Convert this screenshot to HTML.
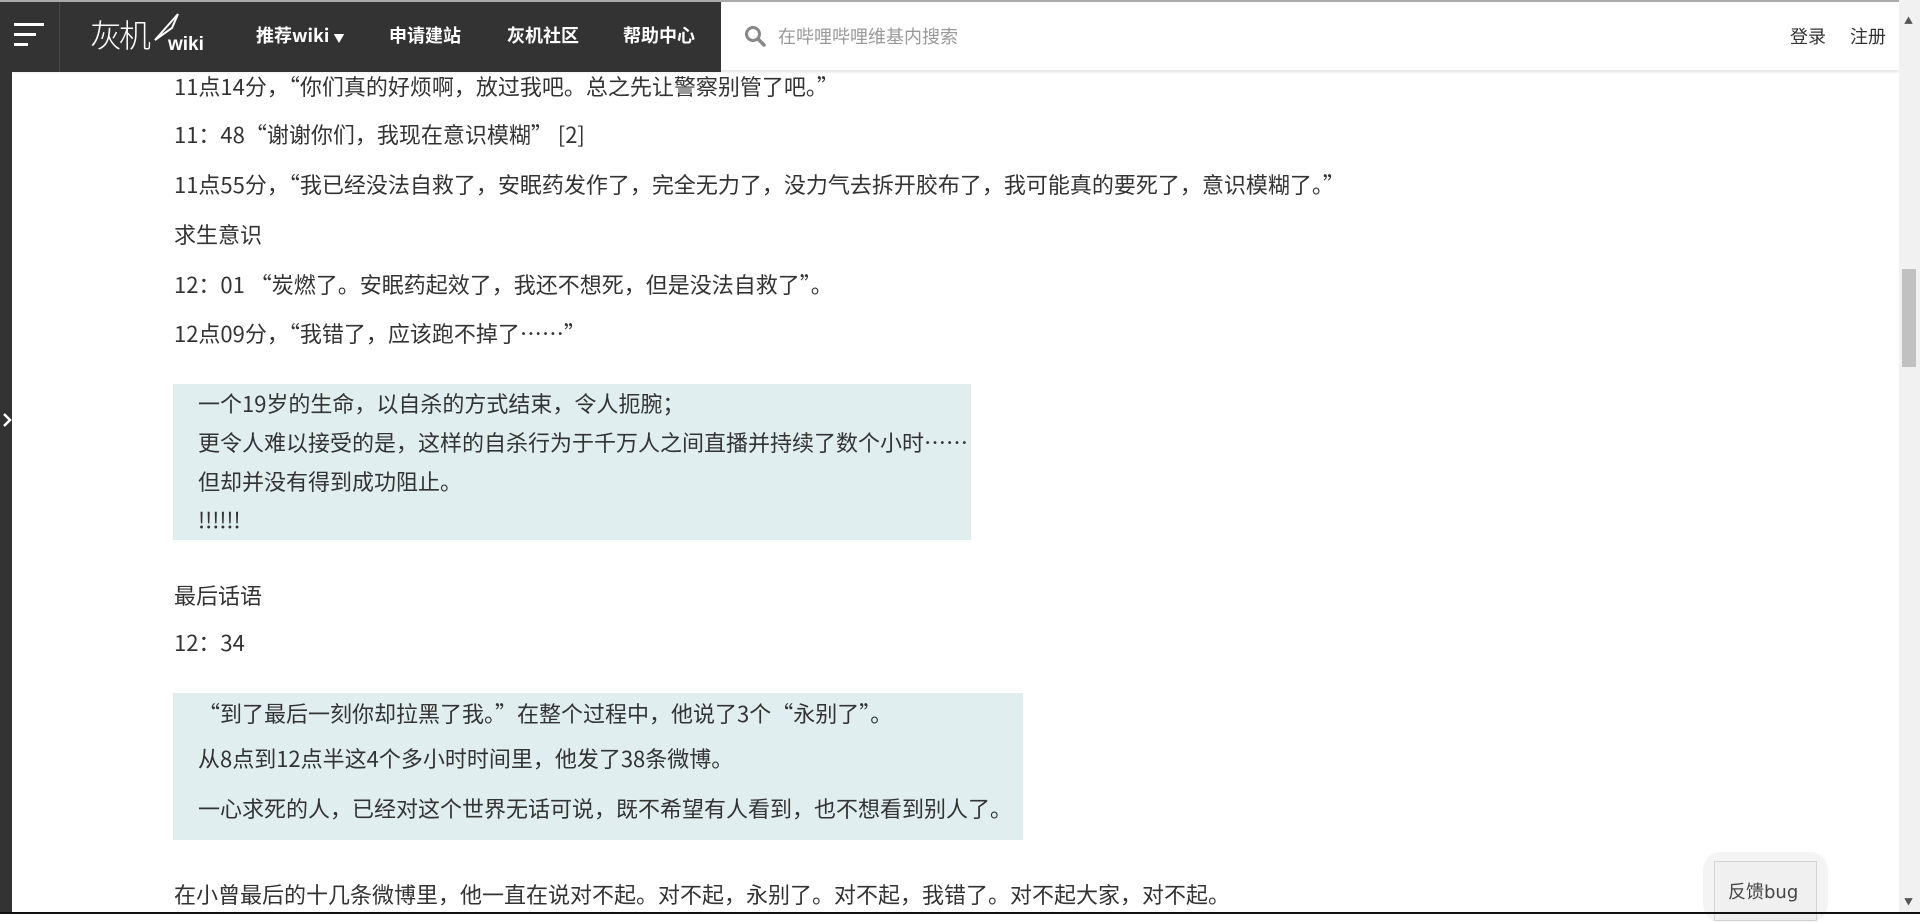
<!DOCTYPE html>
<html><head><meta charset="utf-8"><style>
*{margin:0;padding:0;box-sizing:border-box}
body{width:1920px;height:914px;overflow:hidden;background:#fff;font-family:"Noto Sans CJK SC","Liberation Sans",sans-serif;color:#333;position:relative}
.hdr{position:absolute;left:0;top:0;width:1899px;height:70px;background:#fff;border-top:2px solid #aaa;box-shadow:0 2px 3px rgba(0,0,0,.12)}
.dark{position:absolute;left:0;top:0;width:721px;height:70px;background:#333}
.div{position:absolute;left:59px;top:0;width:1px;height:70px;background:#4a4a4a}
.nav{position:absolute;top:20px;color:#fff;font-size:18px;font-weight:bold;line-height:26px}
.t{position:absolute;left:174px;font-size:22px;line-height:24px;white-space:nowrap}
.box{position:absolute;left:173px;background:#e1eef0}
.b{position:absolute;left:198px;font-size:22px;line-height:24px;white-space:nowrap}
</style></head><body>
<div class="hdr">
 <div class="dark"></div>
 <div class="div"></div>
 <div style="position:absolute;left:14px;top:21px;width:30px;height:3px;background:#fff"></div>
 <div style="position:absolute;left:14px;top:31px;width:22px;height:3px;background:#fff"></div>
 <div style="position:absolute;left:14px;top:41px;width:14px;height:3px;background:#fff"></div>
 <div style="position:absolute;left:90px;top:12px;color:#fff;font-size:32px;font-weight:300;letter-spacing:-3px;line-height:40px">灰机</div>
 <svg style="position:absolute;left:152px;top:10px" width="30" height="30" viewBox="0 0 30 30"><path d="M3 28 L26 2 L20 16 Z" fill="none" stroke="#fff" stroke-width="2"/></svg>
 <div style="position:absolute;left:168px;top:32px;color:#fff;font-size:19px;font-weight:bold;font-family:'Liberation Sans',sans-serif">wiki</div>
 <div class="nav" style="left:256px">推荐wiki <span style="font-size:11px">▼</span></div>
 <div class="nav" style="left:389px">申请建站</div>
 <div class="nav" style="left:507px">灰机社区</div>
 <div class="nav" style="left:623px">帮助中心</div>
 <svg style="position:absolute;left:743px;top:22px" width="24" height="24" viewBox="0 0 24 24"><circle cx="10" cy="10" r="6.5" fill="none" stroke="#888" stroke-width="3"/><path d="M15 15 L21 21" stroke="#888" stroke-width="3.5" stroke-linecap="round"/></svg>
 <div style="position:absolute;left:778px;top:21px;color:#999;font-size:18px;line-height:26px">在哔哩哔哩维基内搜索</div>
 <div style="position:absolute;left:1790px;top:21px;font-size:18px;color:#333;line-height:26px">登录</div>
 <div style="position:absolute;left:1850px;top:21px;font-size:18px;color:#333;line-height:26px">注册</div>
</div>
<div style="position:absolute;left:0;top:70px;width:12px;height:844px;background:#333"></div>
<svg style="position:absolute;left:2px;top:412px" width="10" height="16" viewBox="0 0 10 16"><path d="M2 2 L8 8 L2 14" fill="none" stroke="#fff" stroke-width="2.5"/></svg>
<div style="position:absolute;left:1899px;top:0;width:21px;height:914px;background:#f1f1f1"></div>
<div style="position:absolute;left:1902px;top:269px;width:14px;height:98px;background:#c1c1c1"></div>
<div style="position:absolute;left:1904px;top:14px;font-size:9px;color:#555">▲</div>
<div style="position:absolute;left:1904px;top:895px;font-size:9px;color:#555">▼</div>

<div class="t" style="top:74px">11点14分，“你们真的好烦啊，放过我吧。总之先让警察别管了吧。”</div>
<div class="t" style="top:122px">11：48“谢谢你们，我现在意识模糊” [2]</div>
<div class="t" style="top:172px">11点55分，“我已经没法自救了，安眠药发作了，完全无力了，没力气去拆开胶布了，我可能真的要死了，意识模糊了。”</div>
<div class="t" style="top:222px">求生意识</div>
<div class="t" style="top:272px">12：01 “炭燃了。安眠药起效了，我还不想死，但是没法自救了”。</div>
<div class="t" style="top:321px">12点09分，“我错了，应该跑不掉了……”</div>
<div class="box" style="top:384px;width:798px;height:156px"></div>
<div class="b" style="top:391px">一个19岁的生命，以自杀的方式结束，令人扼腕；</div>
<div class="b" style="top:430px">更令人难以接受的是，这样的自杀行为于千万人之间直播并持续了数个小时……</div>
<div class="b" style="top:469px">但却并没有得到成功阻止。</div>
<div class="b" style="top:507px">!!!!!!</div>
<div class="t" style="top:583px">最后话语</div>
<div class="t" style="top:630px">12：34</div>
<div class="box" style="top:693px;width:850px;height:147px"></div>
<div class="b" style="top:701px">“到了最后一刻你却拉黑了我。”在整个过程中，他说了3个“永别了”。</div>
<div class="b" style="top:746px">从8点到12点半这4个多小时时间里，他发了38条微博。</div>
<div class="b" style="top:796px">一心求死的人，已经对这个世界无话可说，既不希望有人看到，也不想看到别人了。</div>
<div class="t" style="top:882px">在小曾最后的十几条微博里，他一直在说对不起。对不起，永别了。对不起，我错了。对不起大家，对不起。</div>

<div style="position:absolute;left:1703px;top:852px;width:125px;height:70px;border-radius:18px;background:#f4f4f4"></div>
<div style="position:absolute;left:1714px;top:861px;width:103px;height:60px;background:#f0f0f0;border:1px solid #d4d4d4;font-family:'DejaVu Sans','Noto Sans CJK SC',sans-serif;font-size:18px;color:#444;padding:16px 0 0 13px">反馈bug</div>
<div style="position:absolute;left:0;top:912px;width:1920px;height:2px;background:#111"></div>
</body></html>
